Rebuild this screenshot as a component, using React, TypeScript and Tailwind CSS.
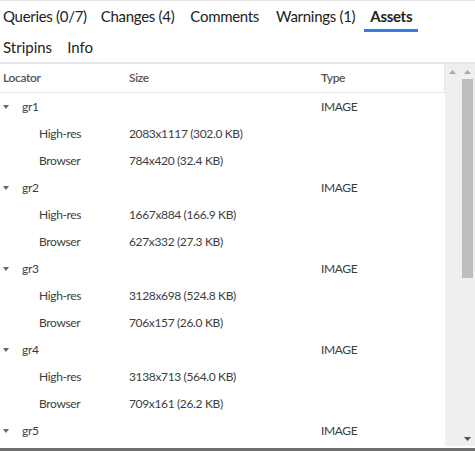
import React from "react";

const groups = [
  { name: "gr1", hi: "2083x1117 (302.0 KB)", br: "784x420 (32.4 KB)" },
  { name: "gr2", hi: "1667x884 (166.9 KB)", br: "627x332 (27.3 KB)" },
  { name: "gr3", hi: "3128x698 (524.8 KB)", br: "706x157 (26.0 KB)" },
  { name: "gr4", hi: "3138x713 (564.0 KB)", br: "709x161 (26.2 KB)" },
];

function Caret() {
  return (
    <svg width="6" height="4" viewBox="0 0 6 4" className="shrink-0">
      <path d="M0 0 L6 0 L3 4 Z" fill="#666" />
    </svg>
  );
}

function Up({ color = "#a8a8a8" }: { color?: string }) {
  return (
    <svg width="7" height="4" viewBox="0 0 7 4">
      <path d="M0 4 L7 4 L3.5 0 Z" fill={color} />
    </svg>
  );
}

function GroupRow({ name }: { name: string }) {
  return (
    <div className="flex h-[27px] items-center text-[#3d3d3d]">
      <div className="flex w-[129px] items-center pl-[3px]">
        <Caret />
        <span className="ml-[13px]">{name}</span>
      </div>
      <div className="w-[192px]" />
      <div>IMAGE</div>
    </div>
  );
}

function SubRow({ label, value }: { label: string; value: string }) {
  return (
    <div className="flex h-[27px] items-center text-[#3d3d3d]">
      <div className="w-[129px] pl-[39px]">{label}</div>
      <div className="w-[192px]">{value}</div>
    </div>
  );
}

export default function App() {
  return (
    <div
      className="flex h-[451px] w-[475px] flex-col overflow-hidden bg-white"
      style={{ fontFamily: "Lato, 'Noto Sans', sans-serif" }}
    >
      <div className="h-[1px] bg-[#e6e6e6]" />
      <div className="flex h-[31px] items-end text-[15px] tracking-[-0.3px] text-[#222]">
        <div className="flex h-[31px] items-center pl-[3px] pr-[6px]">Queries (0/7)</div>
        <div className="ml-[2px] flex h-[31px] items-center px-[6px]">Changes (4)</div>
        <div className="ml-[4px] flex h-[31px] items-center px-[6px]">Comments</div>
        <div className="ml-[5px] flex h-[31px] items-center px-[6px]">Warnings (1)</div>
        <div className="ml-[3px] flex h-[31px] items-center border-b-[3px] border-[#2f7fe6] px-[6px] pt-[3px] font-bold">
          Assets
        </div>
      </div>
      <div className="flex h-[30px] items-center text-[15px] tracking-[-0.3px] text-[#222]">
        <div className="pl-[3px] pr-[6px] tracking-[0px]">Stripins</div>
        <div className="ml-[3px] px-[6px] tracking-[0px]">Info</div>
      </div>
      <div className="h-[2px] bg-[#e6e6e8]" />
      <div className="flex h-[382px] text-[12px] tracking-[-0.35px]">
        <div className="flex-1 overflow-hidden">
          <div className="flex h-[29px] items-center border-b border-r border-[#e8e8ea] font-semibold text-[#555]">
            <div className="w-[129px] pl-[3px]">Locator</div>
            <div className="w-[192px]">Size</div>
            <div>Type</div>
          </div>
          {groups.map((g) => (
            <div key={g.name}>
              <GroupRow name={g.name} />
              <SubRow label="High-res" value={g.hi} />
              <SubRow label="Browser" value={g.br} />
            </div>
          ))}
          <GroupRow name="gr5" />
        </div>
        <div className="flex w-[30px] bg-[#efefef]">
          <div className="flex w-[15px] justify-center pt-[6px]">
            <div className="h-[4px]">
              <Up />
            </div>
          </div>
          <div className="flex w-[15px] flex-col items-center pt-[6px]">
            <Up />
            <div className="mt-[5px] h-[199px] w-[11px] bg-[#bdbdbd]" />
            <div className="flex-1" />
            <div className="mb-[5px] rotate-180">
              <Up color="#505050" />
            </div>
          </div>
        </div>
      </div>
      <div className="h-[2px] bg-white" />
      <div className="h-[3px] bg-[#6e6e6e]" />
    </div>
  );
}
